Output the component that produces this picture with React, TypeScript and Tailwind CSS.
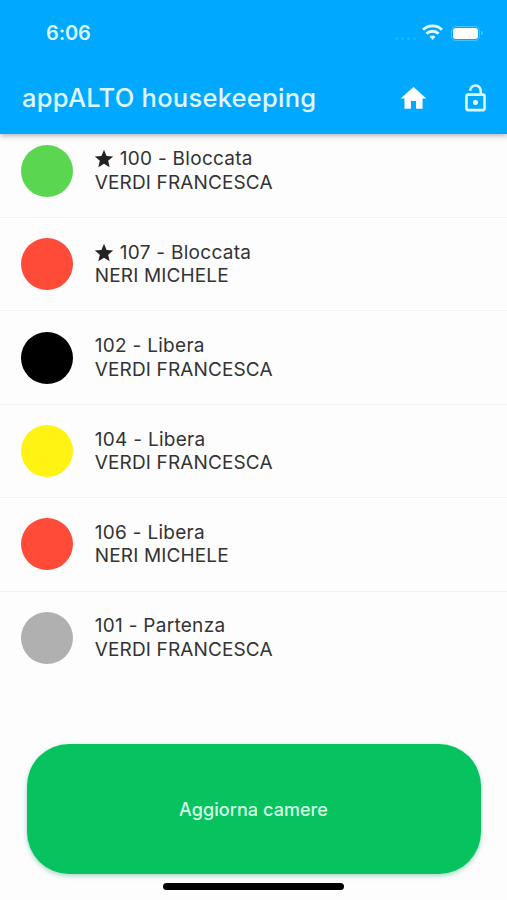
import { MdHome, MdLockOpen, MdStar } from 'react-icons/md';

type Room = {
  number: string;
  status: string;
  guest: string;
  color: string;
  starred?: boolean;
};

const rooms: Room[] = [
  { number: '100', status: 'Bloccata', guest: 'VERDI FRANCESCA', color: 'bg-[#5bd651]', starred: true },
  { number: '107', status: 'Bloccata', guest: 'NERI MICHELE', color: 'bg-[#ff4b38]', starred: true },
  { number: '102', status: 'Libera', guest: 'VERDI FRANCESCA', color: 'bg-black' },
  { number: '104', status: 'Libera', guest: 'VERDI FRANCESCA', color: 'bg-[#fff314]' },
  { number: '106', status: 'Libera', guest: 'NERI MICHELE', color: 'bg-[#ff4b38]' },
  { number: '101', status: 'Partenza', guest: 'VERDI FRANCESCA', color: 'bg-[#b0b0b0]' },
];

function StatusBar() {
  return (
    <div className="flex h-[66px] items-center pl-[46px] pr-[24px]">
      <span className="text-[20px] leading-none font-semibold tracking-[-0.1px] text-[#d9f6ff]">6:06</span>
      {/* No signal: four faint dots */}
      <div className="ml-auto mt-[10px] mr-[6px] flex gap-[3px]">
        {[0, 1, 2, 3].map((dot) => (
          <i key={dot} className="size-[3px] rounded-full bg-[#1db5ff]" />
        ))}
      </div>
      <svg className="mr-[8px] mb-[2px] h-[16px] w-[21px]" viewBox="0 0 21 16" fill="none" stroke="#e4faff" strokeWidth="2.9">
        <path d="M1 5.7a13.6 13.6 0 0 1 19 0" />
        <path d="M4.4 9.7a8.8 8.8 0 0 1 12.2 0" />
        <path d="M7.6 12.8a4.4 4.4 0 0 1 5.8 0L10.5 16z" fill="#e4faff" stroke="none" />
      </svg>
      <div className="h-[15px] w-[29px] rounded-[5px] border border-[#42c4ff] p-px">
        <div className="h-full rounded-[3px] bg-white" />
      </div>
      <i className="ml-px h-[4px] w-[2px] rounded-r-full bg-[#42c4ff]" />
    </div>
  );
}

function RoomRow({ room }: { room: Room }) {
  return (
    <li className="flex h-[93.4px] items-center border-b border-[#f1f1f1] pl-[21.4px] last:border-transparent">
      <span className={`size-[52px] shrink-0 rounded-full ${room.color}`} />
      <div className="ml-[21.4px] text-[19px] leading-[23.4px] text-[#333]">
        <p className="flex items-center tracking-[0.28px]">
          {room.starred && <MdStar size={22} className="-ml-[2px] mr-[5px] text-[#222]" />}
          {room.number} - {room.status}
        </p>
        <p className="tracking-[0.14px]">{room.guest}</p>
      </div>
    </li>
  );
}

function App() {
  return (
    <div className="flex h-[900px] w-full flex-col overflow-hidden bg-[#fdfdfd] font-['Inter',sans-serif]">
      <header className="relative z-10 h-[134px] shrink-0 bg-[#00a8ff] shadow-[0_2px_5px_rgba(0,0,0,0.28)]">
        <StatusBar />
        <div className="flex h-[64px] items-center pl-[22px] pr-[16px] text-[#e0f9ff]">
          <h1 className="text-[25.5px] leading-none font-medium tracking-[0.26px]">appALTO housekeeping</h1>
          <button className="ml-auto mr-[31px] text-white" aria-label="Home">
            <MdHome size={31} />
          </button>
          <button aria-label="Sblocca">
            <MdLockOpen size={31} />
          </button>
        </div>
      </header>

      {/* List is scrolled slightly under the header */}
      <ul className="-mt-[9.3px] shrink-0">
        {rooms.map((room) => (
          <RoomRow key={room.number} room={room} />
        ))}
      </ul>

      <footer className="mt-auto flex flex-col items-center pb-[10px]">
        <button className="h-[130px] w-[454px] rounded-[42px] bg-[#06c360] text-[18px] font-medium tracking-[0.06px] text-[#d5ffe5] shadow-[0_2px_5px_rgba(0,140,100,0.35)]">
          Aggiorna camere
        </button>
        <div className="mt-[9px] h-[7px] w-[181px] rounded-full bg-black" />
      </footer>
    </div>
  );
}

export default App;
